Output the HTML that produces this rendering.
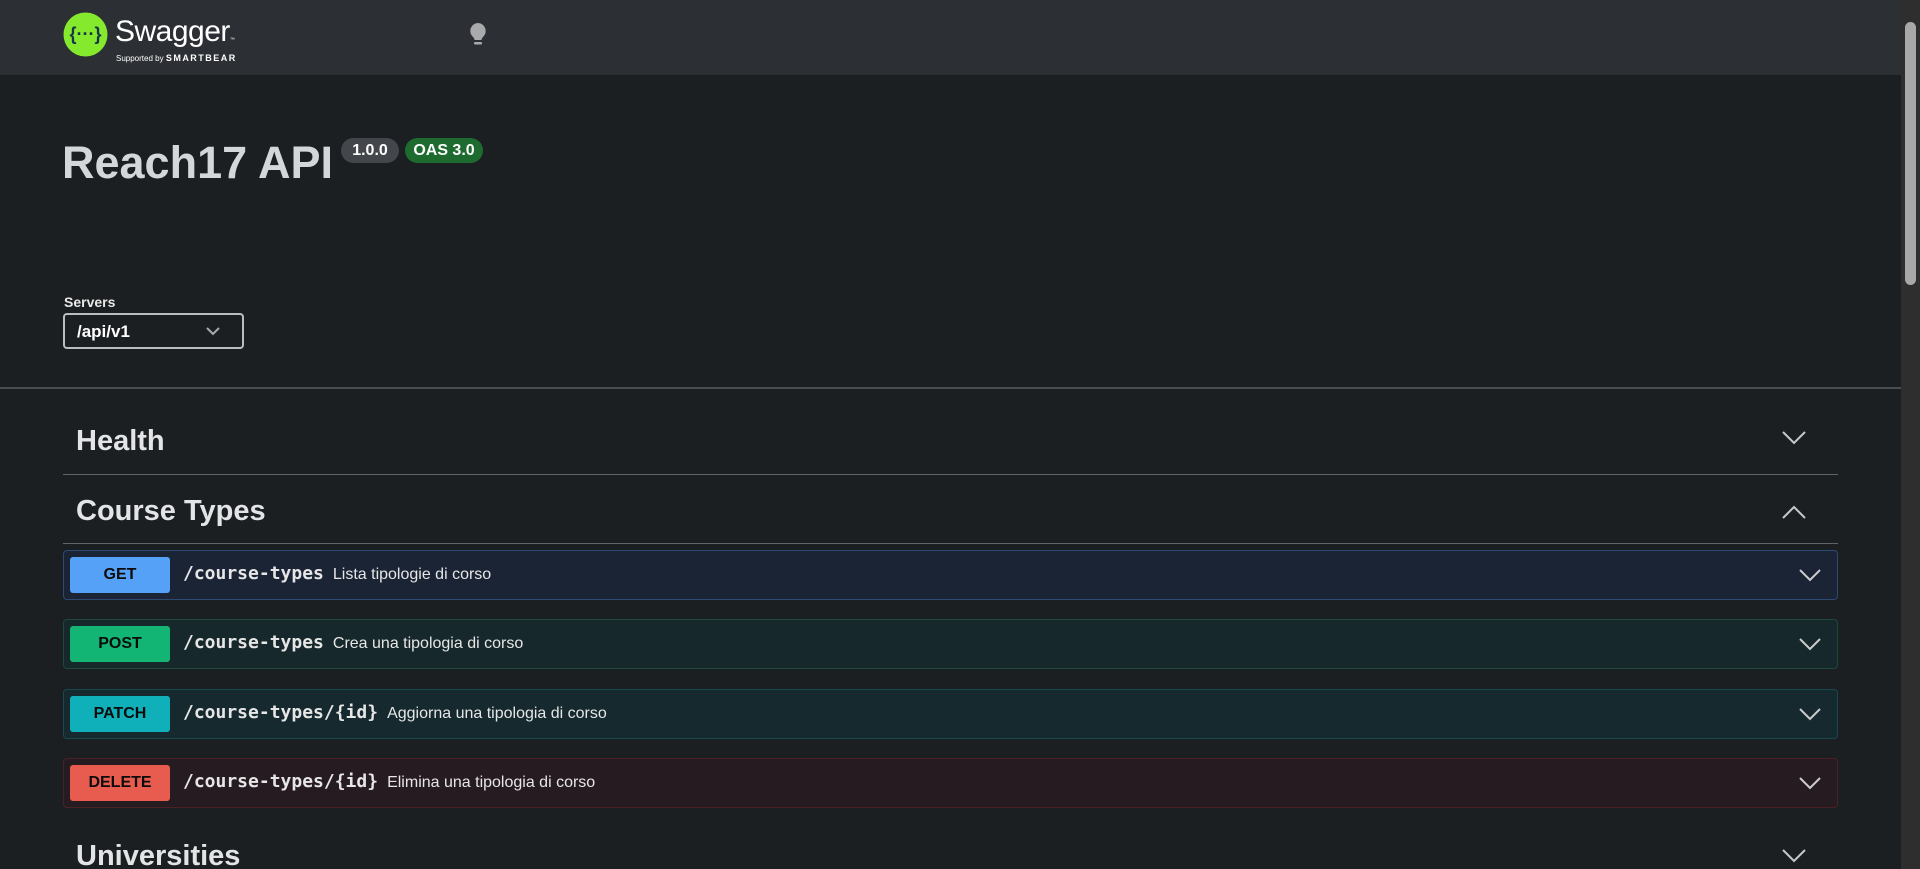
<!DOCTYPE html>
<html style="overflow:hidden;height:869px"><head><meta charset="utf-8"><style>
*{box-sizing:border-box;margin:0;padding:0}
body{width:1920px;height:869px;overflow:hidden;background:#1c1f22;font-family:"Liberation Sans",sans-serif;color:#d4d7da;position:relative}
.hdr{position:absolute;left:0;top:0;width:1901px;height:75px;background:#2c2f33}
.abs{position:absolute}
.sb{position:absolute;left:1901px;top:0;width:19px;height:869px;background:#2e2e2e}
.thumb{position:absolute;left:1905px;top:22px;width:11px;height:263px;background:#a8a8a8;border-radius:6px}
.sec{position:absolute;left:63px;width:1775px;border-bottom:1px solid #606468}
.sec h2{position:absolute;left:13px;font-size:29px;font-weight:bold;color:#e2e4e6}
.op{position:absolute;left:63px;width:1775px;height:50px;border:1px solid;border-radius:4px}
.m{position:absolute;left:6px;top:6px;width:100px;height:36px;border-radius:3px;color:#0b0b0b;font-weight:bold;font-size:16px;text-align:center;line-height:36px}
.line{position:absolute;left:119px;top:12px;white-space:nowrap}
.p{font-family:"DejaVu Sans Mono","Liberation Mono",monospace;font-weight:bold;font-size:18px;color:#e6e6e6}
.d{font-size:16px;color:#e6e6e6;margin-left:9px}
.chev{position:absolute;right:16px;top:17px}
</style></head><body>
<div class="hdr"></div>
<svg class="abs" style="left:63px;top:12px" width="45" height="45" viewBox="0 0 45 45"><circle cx="22.5" cy="22.5" r="22" fill="#85ea2d"/><text x="22.5" y="28" text-anchor="middle" font-family="Liberation Sans" font-weight="bold" font-size="18" fill="#173647">{···}</text></svg>
<div class="abs" style="left:115px;top:15px;font-size:30px;color:#fff;letter-spacing:-0.5px">Swagger<span style="font-size:5px">™</span></div>
<div class="abs" style="left:116px;top:53px;font-size:8px;color:#fff">Supported by <span style="font-size:9px;font-weight:bold;letter-spacing:1.5px">SMARTBEAR</span></div>
<svg class="abs" style="left:468px;top:22px" width="20" height="26" viewBox="0 0 20 26"><path d="M10 1a8 8 0 0 0-5 14c1 1 1.5 2 1.5 3h7c0-1 .5-2 1.5-3a8 8 0 0 0-5-14z" fill="#a9aaab"/><rect x="6" y="20" width="8" height="2.5" rx="1" fill="#a9aaab"/></svg>
<div class="abs" style="left:62px;top:137px;font-size:45px;font-weight:bold;color:#d4d7da">Reach17 API</div>
<div class="abs" style="left:341px;top:138px;width:58px;height:25px;border-radius:13px;background:#43474c;color:#fff;font-weight:bold;font-size:16px;text-align:center;line-height:25px">1.0.0</div>
<div class="abs" style="left:405px;top:138px;width:78px;height:25px;border-radius:13px;background:#1e6b2f;color:#fff;font-weight:bold;font-size:16px;text-align:center;line-height:25px">OAS 3.0</div>
<div class="abs" style="left:64px;top:294px;font-size:14px;font-weight:bold;color:#e8e8e8">Servers</div>
<div class="abs" style="left:63px;top:313px;width:181px;height:36px;border:2px solid #bbbdc0;border-radius:4px"><span class="abs" style="left:12px;top:7px;font-size:17px;font-weight:bold;color:#fff">/api/v1</span><svg class="abs" style="left:140px;top:11px" width="16" height="10"><path d="M2 2l6 6 6-6" stroke="#aaa" stroke-width="2" fill="none"/></svg></div>
<div class="abs" style="left:0;top:387px;width:1901px;height:2px;background:#4a4d50"></div>
<div class="sec" style="top:407px;height:68px"><h2 style="top:18px">Health</h2><svg class="abs" style="left:1719px;top:24px" width="24" height="14"><path d="M1 1l11 11 11-11" stroke="#c8c8c8" stroke-width="2" fill="none"/></svg></div>
<div class="sec" style="top:475px;height:69px"><h2 style="top:20px">Course Types</h2><svg class="abs" style="left:1719px;top:30px" width="24" height="14"><path d="M1 13l11-11 11 11" stroke="#c8c8c8" stroke-width="2" fill="none"/></svg></div>
<div class="op" style="top:550px;background:#1a2435;border-color:#2c4a72"><div class="m" style="background:#55a1f8">GET</div><div class="line"><span class="p">/course-types</span><span class="d">Lista tipologie di corso</span></div><svg class="chev" width="22" height="14"><path d="M1 2l10 10 10-10" stroke="#ccc" stroke-width="2" fill="none"/></svg></div>
<div class="op" style="top:619px;background:#16282b;border-color:#1c4a38"><div class="m" style="background:#12b573">POST</div><div class="line"><span class="p">/course-types</span><span class="d">Crea una tipologia di corso</span></div><svg class="chev" width="22" height="14"><path d="M1 2l10 10 10-10" stroke="#ccc" stroke-width="2" fill="none"/></svg></div>
<div class="op" style="top:689px;background:#15292f;border-color:#1a4850"><div class="m" style="background:#10b0bb">PATCH</div><div class="line"><span class="p">/course-types/{id}</span><span class="d">Aggiorna una tipologia di corso</span></div><svg class="chev" width="22" height="14"><path d="M1 2l10 10 10-10" stroke="#ccc" stroke-width="2" fill="none"/></svg></div>
<div class="op" style="top:758px;background:#261b21;border-color:#4a2226"><div class="m" style="background:#e85c50">DELETE</div><div class="line"><span class="p">/course-types/{id}</span><span class="d">Elimina una tipologia di corso</span></div><svg class="chev" width="22" height="14"><path d="M1 2l10 10 10-10" stroke="#ccc" stroke-width="2" fill="none"/></svg></div>
<div class="abs" style="left:76px;top:840px;font-size:29px;font-weight:bold;color:#e2e4e6">Universities</div>
<svg class="abs" style="left:1782px;top:849px" width="24" height="14"><path d="M1 1l11 11 11-11" stroke="#c8c8c8" stroke-width="2" fill="none"/></svg>
<div class="sb"></div><div class="thumb"></div>
</body></html>
